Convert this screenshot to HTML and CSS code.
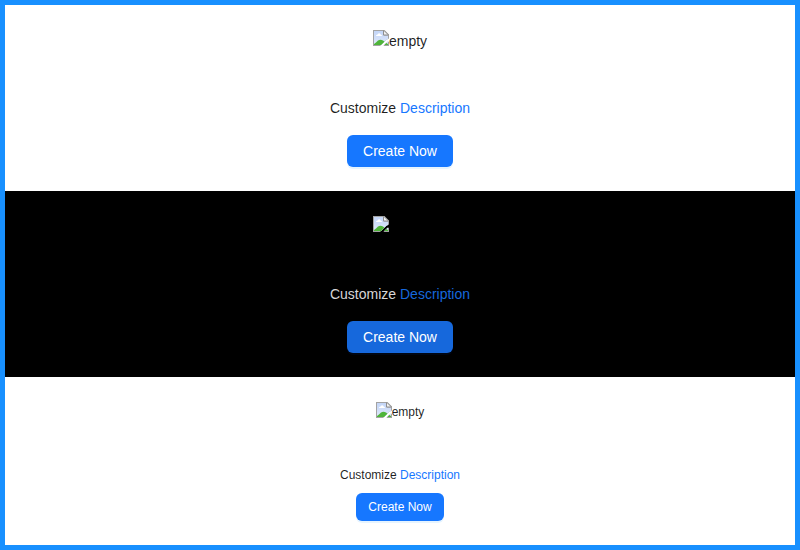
FILE: index.html
```
<!DOCTYPE html>
<html lang="en">
<head>
<meta charset="utf-8">
<title>Empty</title>
<link rel="stylesheet" href="styles.css">
</head>
<body>
<svg class="defs" width="0" height="0" aria-hidden="true">
  <defs>
    <linearGradient id="sky" x1="0" y1="0" x2="0" y2="1"><stop offset="0" stop-color="#c3d5f7"/><stop offset="1" stop-color="#dfe9fb"/></linearGradient>
    <clipPath id="torn"><path d="M0 0H11.500L16 4.500V8.600L13.500 9.700L7 16H0ZM16 11.700V16H10.300L14.500 11.700Z"/></clipPath>
    <symbol id="broken" viewBox="0 0 16 16">
      <g clip-path="url(#torn)">
        <path fill="#a3a3a3" d="M0 0H16V16H0Z"/>
        <path fill="url(#sky)" d="M1 1H10.500V5.500H15V15H1Z"/>
        <path fill="#fff" d="M3 6Q3 4.800 4.300 4.800Q4.800 3.300 6.200 3.300Q7.500 3.400 7.800 4.700Q9 4.800 9 6Z"/>
        <path fill="#4fb53a" d="M1 15V14Q3 12.500 5 10.500Q7.500 9 10 10.500L12.500 12.500L15 14V15Z"/>
        <path fill="#f1f1f1" stroke="#8e8e8e" d="M10.500 .5V5H15.500L11 .5Z"/>
      </g>
    </symbol>
  </defs>
</svg>
<main class="page">
  <section class="empty">
    <div class="image"><svg class="icon"><use href="#broken"/></svg><span>empty</span></div>
    <div class="description">Customize <a>Description</a></div>
    <button class="btn">Create Now</button>
  </section>
  <section class="empty dark">
    <div class="image"><svg class="icon"><use href="#broken"/></svg></div>
    <div class="description">Customize <a>Description</a></div>
    <button class="btn">Create Now</button>
  </section>
  <section class="empty compact">
    <div class="image"><svg class="icon"><use href="#broken"/></svg><span>empty</span></div>
    <div class="description">Customize <a>Description</a></div>
    <button class="btn">Create Now</button>
  </section>
</main>
</body>
</html>
```
FILE: styles.css
```
* { box-sizing: border-box; }
body { margin: 0; font-family: "Liberation Sans", Arial, sans-serif; font-size: 14px; line-height: 22px; color: rgba(0, 0, 0, 0.88); }
.defs { display: block; }
.page { height: 550px; border: 5px solid #1890ff; overflow: hidden; }
.empty { display: flex; flex-direction: column; align-items: center; padding: 24px; background: #fff; }
.image { display: flex; align-items: flex-start; width: 54px; height: 60px; margin-bottom: 8px; padding-top: 1px; }
.icon { display: block; flex: none; width: 16px; height: 16px; }
.description { margin-bottom: 16px; }
.description a { color: #1677ff; }
.btn { height: 32px; padding: 0 16px; border: 0; border-radius: 6px; background: #1677ff; color: #fff; font: inherit; box-shadow: 0 2px 0 rgba(5, 145, 255, 0.1); }
.dark { background: #000; color: rgba(255, 255, 255, 0.85); }
.dark .description a { color: #1668dc; }
.dark .btn { background: #1668dc; box-shadow: 0 2px 0 rgba(0, 60, 180, 0.1); }
.compact { font-size: 12px; line-height: 20px; }
.compact .image { width: max-content; margin-bottom: 4px; }
.compact .description { margin-bottom: 8px; }
.compact .btn { height: 28px; padding: 0 12px; }
```
